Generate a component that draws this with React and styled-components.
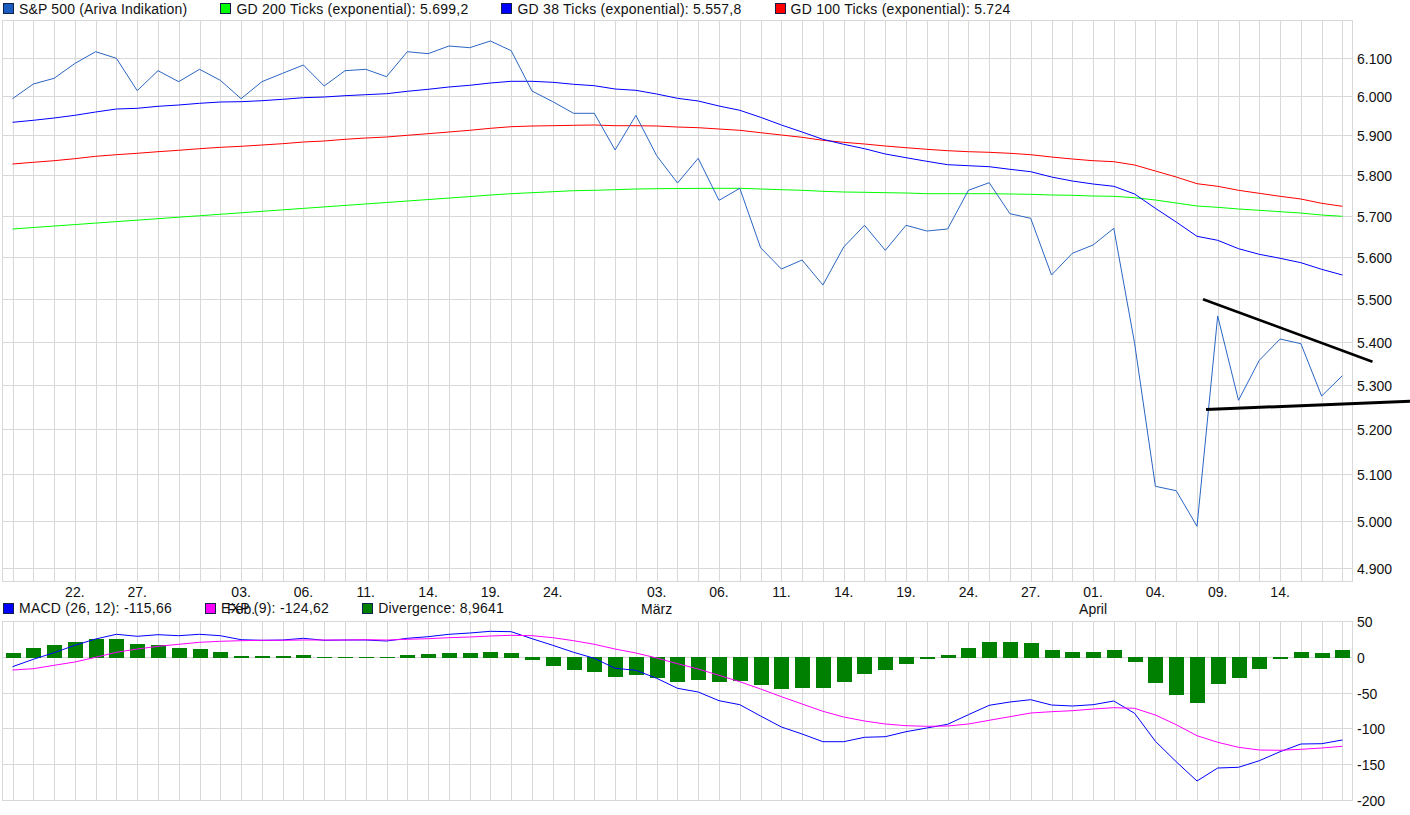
import React from "react";
import styled, { createGlobalStyle } from "styled-components";

const GlobalStyle = createGlobalStyle`
  html, body {
    margin: 0;
    padding: 0;
    background: #fff;
    overflow: hidden;
  }
  body {
    font-family: "Liberation Sans", Arial, sans-serif;
    font-size: 14px;
    color: #111;
  }
`;

const Page = styled.div`
  display: flex;
  flex-direction: column;
  width: 1410px;
  height: 815px;
  overflow: hidden;
`;

const Legend = styled.div`
  display: flex;
  align-items: center;
  gap: 33px;
  height: 18px;
  padding-left: 3px;
  white-space: nowrap;
  letter-spacing: 0.25px;
`;

const TopLegend = styled(Legend)`
  height: 17px;
  flex: none;
`;

const OverlayLegend = styled(Legend)`
  position: absolute;
  left: 0;
  top: 16px;
`;

const LegendItem = styled.div`
  display: flex;
  align-items: center;
  gap: 5px;
  line-height: 16px;
  letter-spacing: ${(p) => p.$spacing || "inherit"};
`;

const Swatch = styled.span`
  display: block;
  box-sizing: border-box;
  width: 11px;
  height: 11px;
  background: ${(p) => p.$color};
  border: 1px solid #10204a;
`;

const PriceChart = styled.svg`
  display: block;
  flex: none;
  width: 1410px;
  height: 566px;
  overflow: visible;
`;

const DateAxis = styled.div`
  position: relative;
  flex: none;
  height: 38px;
`;

const DateLabels = styled.svg`
  display: block;
  width: 1410px;
  height: 38px;
`;

const MacdChart = styled.svg`
  display: block;
  flex: none;
  width: 1410px;
  height: 194px;
  overflow: visible;
`;

const AxisText = styled.text`
  font-family: "Liberation Sans", Arial, sans-serif;
  font-size: 14px;
  fill: #111;
`;

const X0 = 12.5;
const STEP = 20.78;
const xAt = (i) => X0 + STEP * i;
const LEFT = 2.5;
const RIGHT = 1352.5;
const GRID = "#d8d8d8";

const sp500 = [
  98.7, 84, 78.3, 63.5, 51.7, 58.3, 90.7, 70.7, 81.7, 69.3, 80.3, 98.7, 81.7, 73.3, 65, 86, 70.7, 69.3, 76.7, 51.7,
  53.7, 46, 47.7, 41, 50.7, 91, 101.7, 113.3, 113.3, 150, 115.3, 155.7, 183, 158.3, 200.3, 188.3, 247.7, 269, 260, 285,
  247, 225.3, 250.3, 225.3, 231, 229, 190.3, 182.7, 213.7, 218.3, 275, 253.3, 245, 228.3, 343.3, 486.3, 490.7, 526.3,
  316, 400.3, 360.3, 339, 343.7, 396, 375.7,
];

const gd38 = [
  122.3, 120.3, 118, 115.3, 112, 109, 108.3, 106.3, 105, 103.3, 102, 101.7, 100.7, 99.3, 97.7, 97, 95.7, 94.7, 93.7,
  91.3, 89.3, 87, 85.3, 83, 81.3, 81.3, 82.3, 84.3, 85.7, 89, 90.3, 94, 98.3, 101, 106, 110.3, 117.3, 125, 132, 139.3,
  144.3, 148.7, 154, 157.7, 161.3, 164.7, 165.7, 166.7, 169.3, 171.7, 177, 181, 184, 186.3, 194, 208.3, 222, 236.3,
  240.3, 248.7, 254.3, 258.3, 262.7, 269.3, 275,
];

const gd100 = [
  164, 162.3, 160.7, 158.7, 156.3, 154.7, 153.3, 151.7, 150.3, 148.7, 147.3, 146.3, 145, 143.7, 142, 141, 139.3, 138,
  137, 135.3, 133.7, 132, 130.3, 128.3, 126.7, 126, 125.7, 125.3, 125, 125.7, 125.7, 126, 127, 127.7, 129, 130.3, 132.7,
  135, 137.3, 140.3, 142.3, 144, 146, 147.7, 149.3, 150.7, 151.7, 152.3, 153.3, 154.7, 157, 159, 160.7, 161.7, 165, 171,
  177, 183.7, 186.3, 190.3, 193.3, 196.3, 199, 203.3, 206.3,
];

// the first 23 values of the 200 line are practically straight
const gd200 = [
  ...Array.from({ length: 23 }, (_, i) => 229 - 1.473 * i),
  195, 193.7, 192.7, 191.7, 190.7, 190.3, 189.7, 189, 188.7, 188.5, 188.4, 188.3, 188.3, 189, 189.7, 190.3, 191.3, 192,
  192.3, 192.7, 193, 193.7, 193.7, 193.7, 193.7, 194, 194.3, 195, 195.3, 196, 196.3, 197.7, 200, 203, 206, 207.3, 209,
  210.3, 211.7, 213, 215, 216.3,
];

const macd = [
  666.7, 659.3, 652.7, 645.3, 639, 634.3, 636.3, 634.7, 635.7, 634.3, 635.7, 639.7, 640.3, 640, 638.3, 640.3, 640, 640,
  641, 638.3, 636.7, 634.3, 633, 631.3, 631.7, 638.7, 645.3, 652.3, 658.3, 668.3, 670.3, 678.3, 688.3, 692, 700.7,
  704.7, 716, 727, 734, 741.7, 741.7, 737.3, 736.7, 731.7, 728, 724.3, 714.7, 705.3, 702, 699.7, 705, 706, 704.7, 701,
  713.3, 741.3, 761.7, 781, 768, 767.3, 760.7, 751.7, 744, 743.7, 740,
];

const signal = [
  670, 668.7, 665.3, 662, 657.3, 652.3, 649, 646.3, 644.3, 642.3, 641.3, 640.7, 640.3, 640.3, 640, 640, 640, 639.7, 640,
  639.3, 638.7, 637.7, 637, 636, 635.3, 635.7, 637.7, 640.7, 644.3, 649, 653, 658, 663.7, 669, 675.3, 681.7, 689, 696.7,
  704, 711.3, 717, 721, 724, 725.7, 726.3, 726, 724, 720.3, 716.7, 713, 711.7, 710.7, 709, 707.7, 708.3, 715, 724.7,
  735.7, 742.3, 747.3, 750, 750.3, 749.3, 748, 746.3,
];

// bar ends as pixel rows, read off the reference
const divergence = [
  653, 648, 645, 642, 639, 639, 644, 645, 648, 649, 652, 656, 656, 656, 655, 657, 657, 657, 657, 655, 654, 653, 653,
  652, 653, 660, 666, 670, 672, 677, 675, 678, 682, 680, 682, 681, 685, 689, 688, 688, 682, 674, 670, 664, 659, 655,
  648, 642, 642, 643, 650, 652, 652, 650, 662, 683, 695, 703, 684, 678, 669, 659, 652, 653, 650,
];

const priceTicks = [
  ["6.100", 58.5],
  ["6.000", 96.5],
  ["5.900", 135.5],
  ["5.800", 175.5],
  ["5.700", 216.5],
  ["5.600", 257.5],
  ["5.500", 299.5],
  ["5.400", 342.5],
  ["5.300", 385.5],
  ["5.200", 429.5],
  ["5.100", 474.5],
  ["5.000", 521.5],
  ["4.900", 568.5],
];

const macdTicks = [
  ["50", 621.5],
  ["0", 657.5],
  ["-50", 693.5],
  ["-100", 728.5],
  ["-150", 764.5],
  ["-200", 800.5],
];

const days = [
  ["22.", 3],
  ["27.", 6],
  ["03.", 11],
  ["06.", 14],
  ["11.", 17],
  ["14.", 20],
  ["19.", 23],
  ["24.", 26],
  ["03.", 31],
  ["06.", 34],
  ["11.", 37],
  ["14.", 40],
  ["19.", 43],
  ["24.", 46],
  ["27.", 49],
  ["01.", 52],
  ["04.", 55],
  ["09.", 58],
  ["14.", 61],
];

const months = [
  ["Feb.", 11],
  ["März", 31],
  ["April", 52],
];

const Grid = ({ top, bottom, ticks }) => (
  <g stroke={GRID} strokeWidth="1" shapeRendering="crispEdges">
    {sp500.map((_, i) => (
      <line key={i} x1={Math.round(xAt(i)) + 0.5} x2={Math.round(xAt(i)) + 0.5} y1={top} y2={bottom} />
    ))}
    {ticks.map(([label, y]) => (
      <line key={label} x1={LEFT} x2={RIGHT} y1={y} y2={y} />
    ))}
    <rect x={LEFT} y={top} width={RIGHT - LEFT} height={bottom - top} fill="none" />
  </g>
);

const Series = ({ values, color }) => (
  <polyline
    points={values.map((y, i) => `${xAt(i).toFixed(1)},${y}`).join(" ")}
    fill="none"
    stroke={color}
    strokeWidth="1"
  />
);

const Ticks = ({ ticks }) =>
  ticks.map(([label, y]) => (
    <AxisText key={label} x="1357" y={y + 5.5}>
      {label}
    </AxisText>
  ));

const App = () => {
  return (
    <Page>
      <GlobalStyle />
      <TopLegend>
        <LegendItem $spacing="0.17px">
          <Swatch $color="#1a5cc0" />
          S&amp;P 500 (Ariva Indikation)
        </LegendItem>
        <LegendItem>
          <Swatch $color="#00ff00" />
          GD 200 Ticks (exponential): 5.699,2
        </LegendItem>
        <LegendItem>
          <Swatch $color="#0000ff" />
          GD 38 Ticks (exponential): 5.557,8
        </LegendItem>
        <LegendItem>
          <Swatch $color="#ff0000" />
          GD 100 Ticks (exponential): 5.724
        </LegendItem>
      </TopLegend>

      <PriceChart viewBox="0 17 1410 566">
        <Grid top={20.5} bottom={581.5} ticks={priceTicks} />
        <Series values={gd200} color="#00ff00" />
        <Series values={gd100} color="#ff0000" />
        <Series values={gd38} color="#0000ff" />
        <Series values={sp500} color="#2a66c4" />
        <Ticks ticks={priceTicks} />
        <line x1="1203" y1="299.3" x2="1372.5" y2="361.7" stroke="#000" strokeWidth="2.6" />
        <line x1="1206" y1="409.5" x2="1410" y2="401.2" stroke="#000" strokeWidth="3" />
      </PriceChart>

      <DateAxis>
        <DateLabels viewBox="0 583 1410 38">
          {days.map(([label, i]) => (
            <AxisText key={`${label}${i}`} x={xAt(i)} y="597" textAnchor="middle">
              {label}
            </AxisText>
          ))}
          {months.map(([label, i]) => (
            <AxisText key={label} x={xAt(i)} y="614" textAnchor="middle">
              {label}
            </AxisText>
          ))}
        </DateLabels>
        <OverlayLegend>
          <LegendItem>
            <Swatch $color="#0000ff" />
            MACD (26, 12): -115,66
          </LegendItem>
          <LegendItem>
            <Swatch $color="#ff00ff" />
            EXP (9): -124,62
          </LegendItem>
          <LegendItem>
            <Swatch $color="#008000" />
            Divergence: 8,9641
          </LegendItem>
        </OverlayLegend>
      </DateAxis>

      <MacdChart viewBox="0 621 1410 194">
        <Grid top={621.5} bottom={800.5} ticks={macdTicks} />
        <g fill="#008000" shapeRendering="crispEdges">
          {divergence.map((end, i) => {
            const up = end <= 657;
            const y = up ? end : 657;
            const h = up ? 658 - end : end - 657;
            return <rect key={i} x={Math.round(xAt(i)) - 7.5} y={y} width="15" height={h} />;
          })}
        </g>
        <Series values={macd} color="#0000ff" />
        <Series values={signal} color="#ff00ff" />
        <Ticks ticks={macdTicks} />
      </MacdChart>
    </Page>
  );
};

export default App;
